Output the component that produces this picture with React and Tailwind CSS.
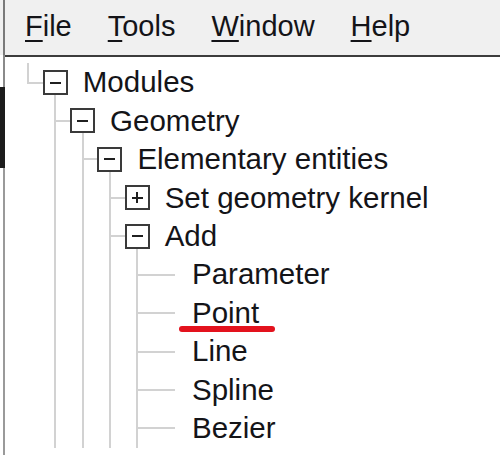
const rows = [
  { label: "Modules", level: 0, box: "minus", last: true },
  { label: "Geometry", level: 1, box: "minus" },
  { label: "Elementary entities", level: 2, box: "minus" },
  { label: "Set geometry kernel", level: 3, box: "plus" },
  { label: "Add", level: 3, box: "minus" },
  { label: "Parameter", level: 4 },
  { label: "Point", level: 4, mark: true },
  { label: "Line", level: 4 },
  { label: "Spline", level: 4 },
  { label: "Bezier", level: 4 },
];

const menu = [
  ["F", "ile"],
  ["T", "ools"],
  ["W", "indow"],
  ["H", "elp"],
];

function Guide({ col, row }) {
  // column where this row hooks onto its parent
  if (col === row.level) {
    return (
      <div className="relative w-[27.3px] shrink-0">
        <div
          className={
            row.last
              ? "absolute left-[12.65px] top-0 h-[19.22px] w-[2px] bg-[#d2d2d2]"
              : "absolute left-[12.65px] top-0 bottom-0 w-[2px] bg-[#d2d2d2]"
          }
        />
        <div
          className={
            row.box
              ? "absolute left-[12.65px] top-[18.22px] h-[2px] w-[16px] bg-[#d2d2d2]"
              : "absolute left-[12.65px] top-[18.22px] h-[2px] w-[39px] bg-[#d2d2d2]"
          }
        />
      </div>
    );
  }
  return (
    <div className="relative w-[27.3px] shrink-0">
      {col > 0 && <div className="absolute left-[12.65px] top-0 bottom-0 w-[2px] bg-[#d2d2d2]" />}
    </div>
  );
}

function Box({ kind }) {
  return (
    <div className="relative z-10 flex h-[25px] w-[25px] items-center justify-center border-2 border-[#3a3a3a] bg-white">
      <div className="absolute h-[2px] w-[11px] bg-[#202020]" />
      {kind === "plus" && <div className="absolute h-[11px] w-[2px] bg-[#202020]" />}
    </div>
  );
}

function Row({ row }) {
  const cols = Array.from({ length: row.level + 1 }, (_, i) => i);
  return (
    <div className="flex h-[38.44px] items-stretch">
      {cols.map((c) => (
        <Guide key={c} col={c} row={row} />
      ))}
      <div className="relative flex w-[27.3px] shrink-0 items-center justify-center">
        {row.box === "minus" && (
          <div className="absolute left-[12.65px] top-[19.22px] bottom-0 w-[2px] bg-[#d2d2d2]" />
        )}
        {row.box && <Box kind={row.box} />}
      </div>
      <div className="relative ml-[13.85px] whitespace-nowrap text-[29.5px] leading-[38.44px]">
        {row.label}
        {row.mark && (
          <div className="absolute left-[-13px] top-[32px] h-[6px] w-[96px] rounded-full bg-[#e3121d]" />
        )}
      </div>
    </div>
  );
}

export default function App() {
  return (
    <div className="flex h-[455px] w-[500px] overflow-hidden bg-white font-['Liberation_Sans',Arial,sans-serif] text-[29px] text-[#141418]">
      <div className="flex w-[5px] shrink-0 flex-col">
        <div className="flex h-[55px] bg-[#f0f0f0]">
          <div className="ml-[3px] w-[2px] bg-[#7a7a7a]" />
        </div>
        <div className="flex h-[32px]">
          <div className="ml-[3px] w-[2px] bg-[#8a8a8a]" />
        </div>
        <div className="h-[81px] bg-[#1c1c1c]" />
        <div className="flex flex-1">
          <div className="ml-[3px] w-[2px] bg-[#9a9a9a]" />
        </div>
      </div>

      <div className="flex min-w-0 flex-1 flex-col">
        <div className="flex h-[57px] shrink-0 gap-[36px] border-b-2 border-[#3c3c3c] bg-[#f0f0f0] pl-[20px] pt-[10px] leading-[33px]">
          {menu.map(([k, rest]) => (
            <span key={k} className="whitespace-nowrap">
              <span className="underline decoration-2 underline-offset-[4px]">{k}</span>
              {rest}
            </span>
          ))}
        </div>

        <div className="flex-1 pl-[9.35px] pt-[6.3px]">
          {rows.map((r) => (
            <Row key={r.label} row={r} />
          ))}
        </div>
      </div>
    </div>
  );
}
